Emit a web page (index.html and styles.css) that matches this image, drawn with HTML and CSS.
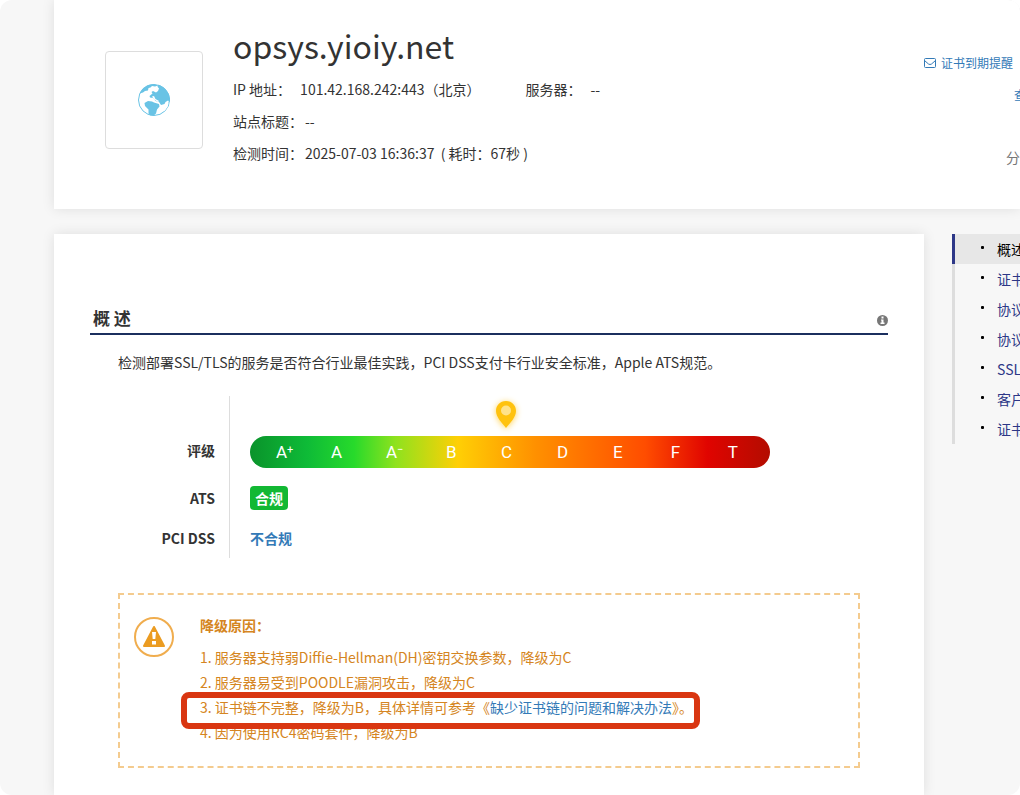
FILE: index.html
```html
<!DOCTYPE html>
<html lang="zh-CN">
<head>
<meta charset="utf-8">
<title>opsys.yioiy.net</title>
<link rel="stylesheet" href="styles.css">
</head>
<body>
<div class="page">
  <header class="site card">
    <div class="site-icon">
      <svg width="32" height="32" viewBox="0 0 32 32" aria-hidden="true">
        <circle cx="16" cy="16" r="15.500" fill="#fff" stroke="#69c3e5"/>
        <path fill="#69c3e5" d="M16 0C9 0 4 4 1.500 9.500L5 8.500l2-1.500 3-.5.5-2.500 2-.5 1.500-1.500 3 .5 3-1z"/>
        <path fill="#69c3e5" d="M20 .8l-.5 2 1.500 1.700-1 2.500-2 1.500-3-1.500-1.500 1 1 1.500-3 2.500.5 1.500 3 .5 2.500 3 3.500 1 2 3 3.500-1 1-2 2.500-1.500 2 1.500A16 16 0 0 0 20 .8z"/>
        <path fill="#69c3e5" d="M6.500 19l3.500-2 4 .5 2 1 5 1.500.5 2.500-2.500 3-1 4-2.500 2.300-3.500-.3-1.500-2v-4L7 22z"/>
        <path fill="#fff" d="M14 12.500l2-.5 1.500 3 3.500 2-1 1-4-2.500zM27 20l2-1.500 1.500 1-1 3.500-3 4-2-1.500z"/>
      </svg>
    </div>
    <div class="site-info">
      <h1 class="site-name">opsys.yioiy.net</h1>
      <div class="facts"><span class="fact fact-wide"><span>IP 地址：</span><span>101.42.168.242:443（北京）</span></span><span class="fact fact-wide"><span>服务器：</span><span>--</span></span></div>
      <div class="facts"><span class="fact"><span>站点标题：</span><span>--</span></span></div>
      <div class="facts"><span class="fact"><span>检测时间：</span><span>2025-07-03 16:36:37&nbsp; ( 耗时：67秒 )</span></span></div>
    </div>
    <div class="actions">
      <a class="remind" href="#remind"><svg width="12" height="12" viewBox="0 0 12 12" fill="none" stroke="currentColor" aria-hidden="true"><rect x=".5" y="1.500" width="11" height="9" rx="1"/><path d="M.5 3.500l4 3.500q1.500 1 3 0l4-3.500"/></svg>证书到期提醒</a>
      <a class="lookup" href="#lookup">查</a>
      <span class="share">分</span>
    </div>
  </header>

  <div class="columns">
    <main class="report card">
      <div class="section-head">
        <h2 class="section-title">概 述</h2>
        <svg class="info" width="11" height="11" viewBox="0 0 11 11" aria-hidden="true"><circle cx="5.500" cy="5.500" r="5.500" fill="#777"/><path fill="#fff" d="M4.500 1.500h2v2h-2zM4 4.500h2.500V7.500H7.500V9H3.500V7.500h1V5.500H4z"/></svg>
      </div>
      <div class="section-body">
        <p class="intro">检测部署SSL/TLS的服务是否符合行业最佳实践，PCI DSS支付卡行业安全标准，Apple ATS规范。</p>
        <dl class="results">
          <dt class="label label-grade">评级</dt>
          <dd class="value value-grade">
            <div class="scale">
              <span>A<sup>+</sup></span><span>A</span><span>A<sup>−</sup></span><span>B</span><span class="current">C<svg class="pin" width="36" height="42" viewBox="0 0 36 42" aria-hidden="true"><path fill="#ffc20e" d="M18 7C12 7 8 11.500 8 17c0 6 6 12 10 17 4-5 10-11 10-17 0-5.500-4-10-10-10z"/><circle cx="18" cy="16.500" r="5" fill="#ffe28a"/></svg></span><span>D</span><span>E</span><span>F</span><span>T</span>
            </div>
          </dd>
          <dt class="label">ATS</dt>
          <dd class="value"><span class="badge">合规</span></dd>
          <dt class="label">PCI DSS</dt>
          <dd class="value"><a class="fail" href="#pci">不合规</a></dd>
        </dl>
        <section class="notice">
          <svg class="warning" width="40" height="40" viewBox="0 0 40 40" aria-hidden="true"><circle cx="20" cy="20" r="19" fill="none" stroke="#f0ad4e" stroke-width="2"/><path fill="#eb9c22" stroke="#eb9c22" stroke-width="2" stroke-linejoin="round" d="M20 10L30 29H10z"/><path fill="#fff" d="M18 15h4l-.7 7h-2.600zM18 24h4v3.500h-4z"/></svg>
          <div>
            <h3 class="notice-title">降级原因：</h3>
            <ol class="reasons">
              <li>服务器支持弱Diffie-Hellman(DH)密钥交换参数，降级为C</li>
              <li>服务器易受到POODLE漏洞攻击，降级为C</li>
              <li class="marked">证书链不完整，降级为B，具体详情可参考《<a href="#chain">缺少证书链的问题和解决办法</a>》。</li>
              <li>因为使用RC4密码套件，降级为B</li>
            </ol>
          </div>
        </section>
      </div>
    </main>
    <nav class="toc">
      <a class="active" href="#overview">概述</a>
      <a href="#cert">证书</a>
      <a href="#protocol">协议</a>
      <a href="#detail">协议</a>
      <a href="#ssl">SSL</a>
      <a href="#client">客户</a>
      <a href="#chain">证书</a>
    </nav>
  </div>
</div>
</body>
</html>
```

FILE: styles.css
```css
* { box-sizing: border-box; }

html { background: #fff; }

body {
  margin: 0;
  background: #fff;
  color: #333;
  font-family: "Noto Sans CJK SC", "Noto Sans", sans-serif;
  font-size: 14px;
  line-height: 20px;
}

h1, h2, h3, p, dl, dd, ol { margin: 0; padding: 0; }

a { color: #337ab7; text-decoration: none; }

.page {
  display: flex;
  flex-direction: column;
  gap: 25px;
  height: 100vh;
  padding-left: 54px;
  overflow: hidden;
  background: #f7f7f7;
  border-radius: 12px;
}

.card {
  background: #fff;
  box-shadow: 0 0 12px rgba(0, 0, 0, 0.1);
}

.site {
  display: flex;
  flex: none;
  gap: 30px;
  padding: 23px 0 40px 51px;
}

.site-icon {
  display: flex;
  align-items: center;
  justify-content: center;
  width: 98px;
  height: 98px;
  margin-top: 28px;
  border: 1px solid #ddd;
  border-radius: 4px;
}

.site-info { flex: 1; }

.site-name {
  margin-bottom: 6px;
  font-size: 32px;
  font-weight: 400;
  line-height: 44px;
}

.facts { display: flex; gap: 45px; line-height: 32px; }
.fact { display: flex; gap: 2px; }
.fact-wide { gap: 9px; }

.actions {
  display: flex;
  flex-direction: column;
  width: 96px;
  overflow: hidden;
  padding-top: 24px;
  font-size: 12px;
  line-height: 32px;
  white-space: nowrap;
}

.remind { display: flex; align-items: center; gap: 5px; }
.lookup { padding-left: 90px; }
.share { padding: 36px 0 0 82px; color: #777; font-size: 14px; line-height: 20px; }

.columns {
  display: grid;
  flex: 1;
  grid-template-columns: minmax(0, 1fr) 68px;
  gap: 28px;
}

.report { padding: 70px 36px 27px; }

.section-head {
  display: flex;
  align-items: center;
  justify-content: space-between;
  padding: 0 0 1px 3px;
  border-bottom: 2px solid #1b2f5e;
}

.section-title { font-size: 17px; font-weight: 700; line-height: 28px; }
.info { margin-top: 4px; }

.section-body { padding: 17px 28px 0; }

.results {
  display: grid;
  grid-template-columns: 112px minmax(0, 1fr);
  margin: 24px 0 35px;
}

.label {
  display: flex;
  align-items: center;
  justify-content: flex-end;
  height: 40px;
  padding-right: 14px;
  border-right: 1px solid #ddd;
  font-weight: 700;
}

.value { display: flex; align-items: center; padding-left: 20px; }

.label-grade { height: 82px; padding-top: 26px; }
.value-grade { padding-top: 30px; }

.scale {
  display: grid;
  flex: 0 1 520px;
  grid-template-columns: 55fr 55fr 60fr 55fr 56fr 56fr 58fr 57fr 10fr;
  align-items: center;
  height: 32px;
  padding: 0 32px 0 26px;
  border-radius: 16px;
  background: linear-gradient(90deg, #0a932b 0%, #0ebb37 11%, #27da2b 20%, #8fe21e 28%, #ffcf05 40%, #ff9000 55%, #ff4d00 76%, #e00400 88%, #b30c00 100%);
  color: #fff;
  font-family: Roboto, sans-serif;
  font-size: 17px;
}

.scale sup { font-size: 11px; line-height: 0; vertical-align: 5px; }

.current { position: relative; justify-self: start; }

.pin {
  position: absolute;
  bottom: 26px;
  left: 50%;
  margin-left: -18px;
  filter: drop-shadow(0 1px 3px rgba(255, 194, 14, 0.7));
}

.badge {
  padding: 2px 5px;
  border-radius: 4px;
  background: #12b833;
  color: #fff;
  font-weight: 700;
}

.fail { font-weight: 700; }

.notice {
  display: flex;
  gap: 26px;
  padding: 20px 14px 21px;
  border: 2px dashed #f4cb8e;
  color: #d58521;
}

.warning { flex: none; margin-top: 2px; }

.notice-title { margin-bottom: 10px; font-size: 14px; font-weight: 700; }

.reasons { list-style-position: inside; line-height: 25px; }

.marked { position: relative; width: max-content; }

.marked::after {
  position: absolute;
  inset: -3px -7px -9px -19px;
  border: 6px solid #d93611;
  border-radius: 8px;
  content: "";
}

.toc {
  align-self: start;
  overflow: hidden;
  line-height: 30px;
  white-space: nowrap;
}

.toc a {
  display: flex;
  gap: 13px;
  width: 80px;
  height: 30px;
  padding-left: 26px;
  border-left: 3px solid #ddd;
  color: #2d3787;
}

.toc a::before {
  flex: none;
  width: 3px;
  height: 3px;
  margin-top: 12px;
  border-radius: 1px;
  background: #000;
  content: "";
}

.toc .active {
  border-color: #2d3787;
  background: #e7e7e7;
  color: #000;
}
```
